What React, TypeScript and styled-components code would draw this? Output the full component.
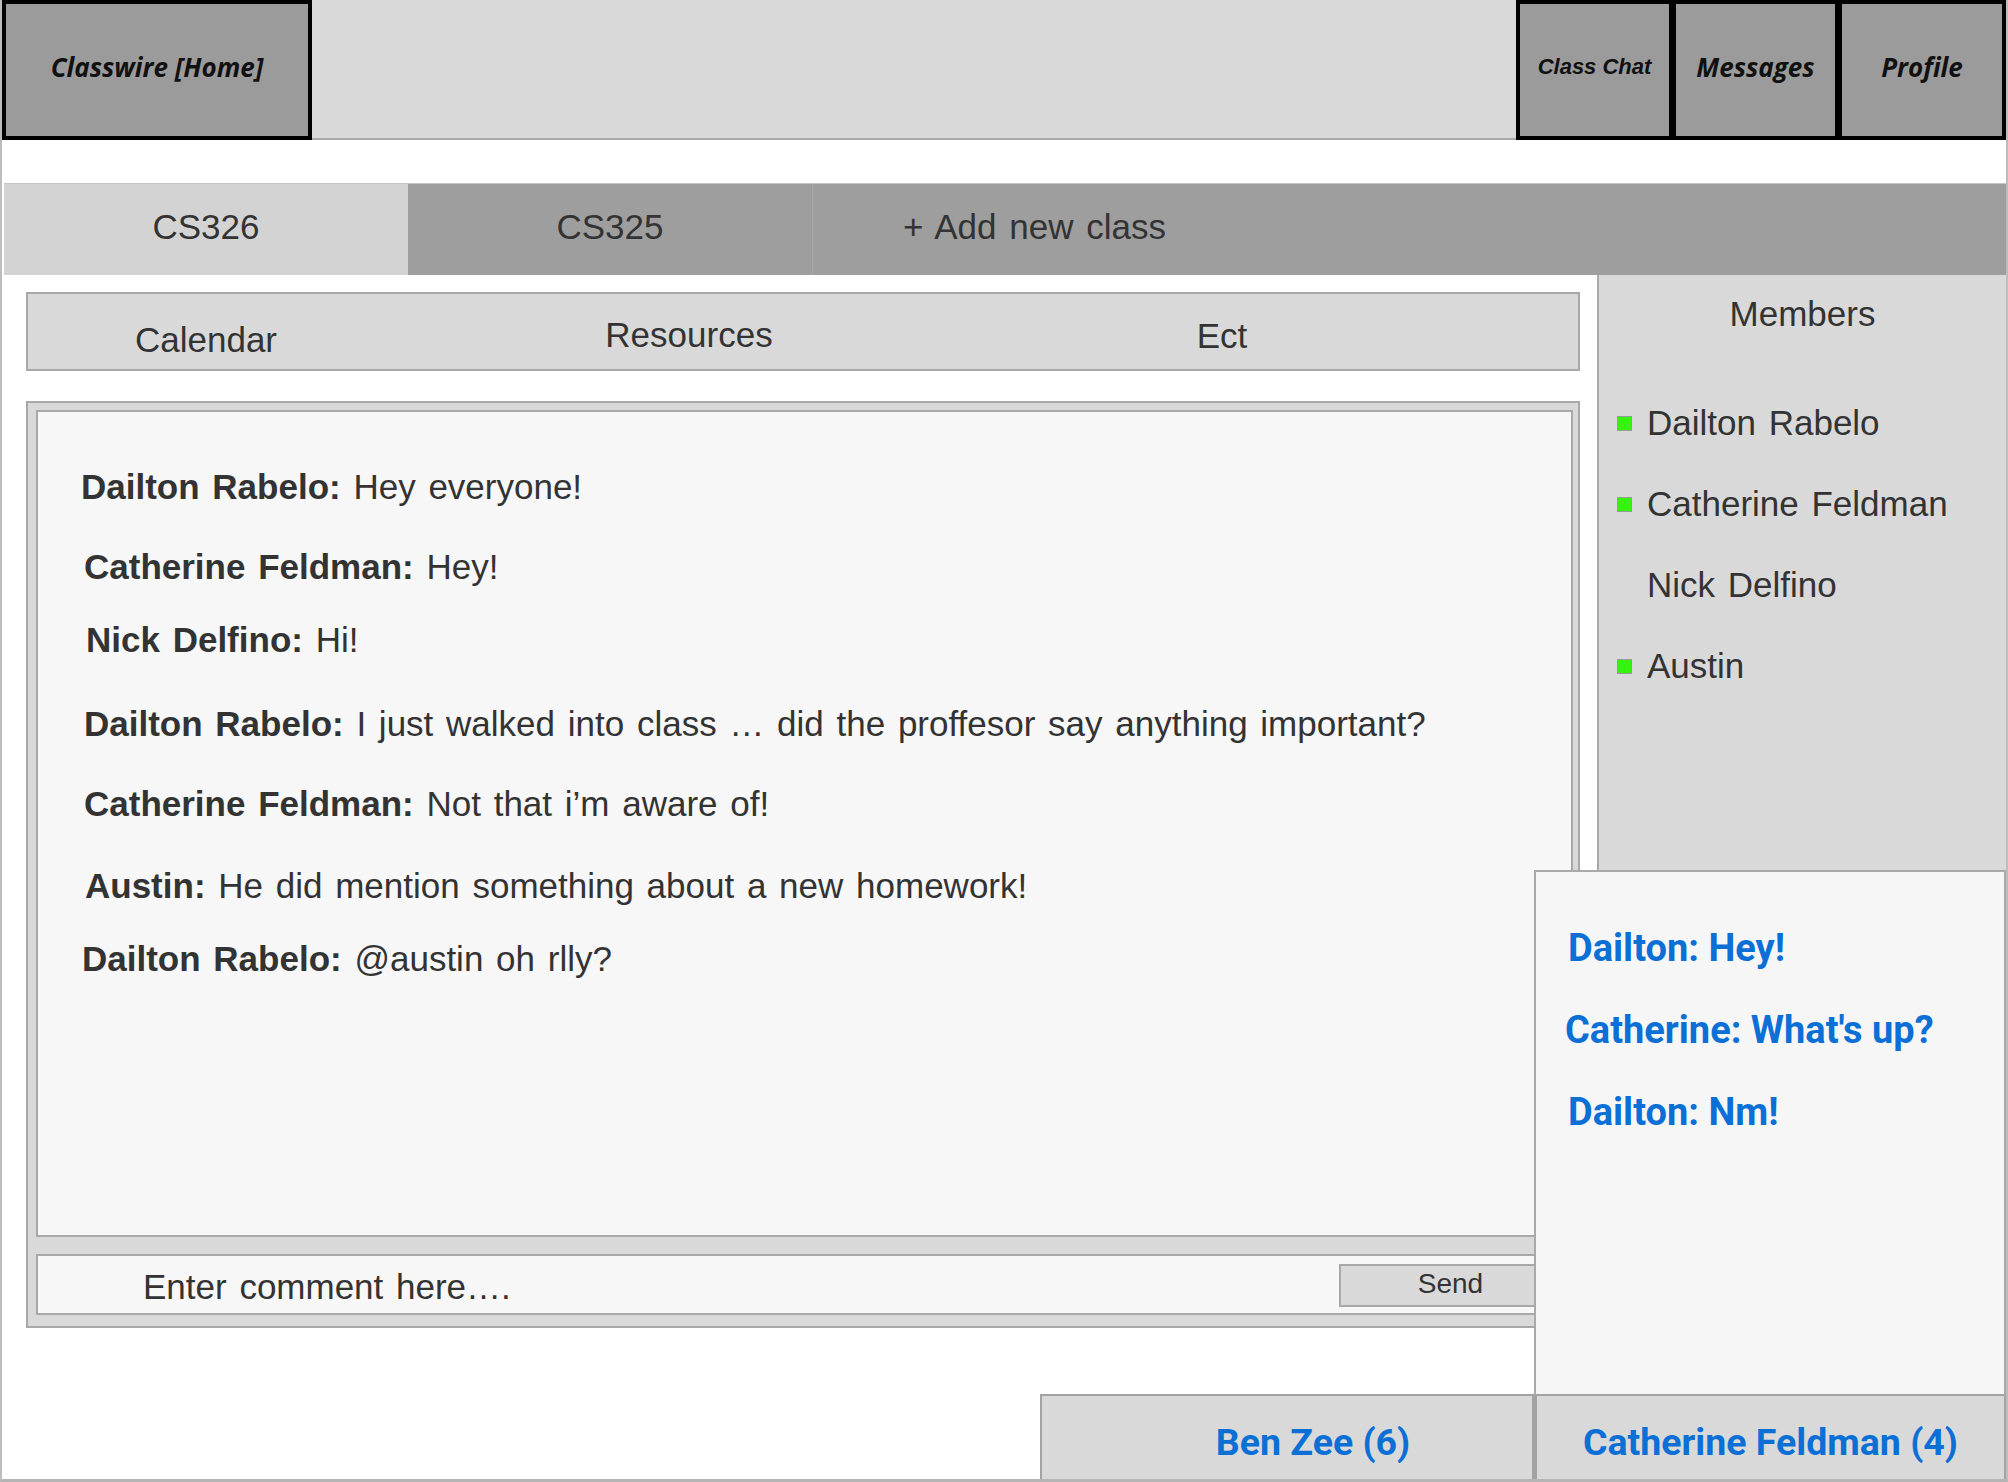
import React from "react";
import styled, { createGlobalStyle } from "styled-components";

const GlobalStyle = createGlobalStyle`
  html, body { margin: 0; padding: 0; background: #ffffff; }
  * { box-sizing: border-box; }
  body { font-family: "Liberation Sans", Arial, sans-serif; color: #333333; word-spacing: 3px; }
`;

const Page = styled.div`
  position: relative;
  width: 2008px;
  height: 1482px;
  display: flex;
  flex-direction: column;
  background: #ffffff;
  border-left: 2px solid #bdbdbd;
  border-right: 2px solid #bdbdbd;
  border-bottom: 3px solid #b5b5b5;
  overflow: hidden;
`;

const TopBar = styled.header`
  display: flex;
  height: 140px;
  flex-shrink: 0;
`;

const NavButton = styled.div<{ $w: number; $sans?: boolean }>`
  width: ${(p) => p.$w}px;
  height: 140px;
  background: #9b9b9b;
  border: 4px solid #000000;
  display: flex;
  align-items: center;
  justify-content: center;
  padding-bottom: 6px;
  font-family: ${(p) => (p.$sans ? '"Liberation Sans", Arial, sans-serif' : '"Open Sans", sans-serif')};
  font-style: italic;
  font-weight: 700;
  font-size: ${(p) => (p.$sans ? 22 : 26)}px;
  word-spacing: 0;
  color: #111111;
  white-space: nowrap;
  & + & { border-left-width: 3px; }
`;

const Filler = styled.div`
  flex: 1;
  background: #d9d9d9;
  border-bottom: 2px solid #a9a9a9;
`;

const CourseTabs = styled.nav`
  margin-top: 43px;
  margin-left: 2px;
  height: 92px;
  flex-shrink: 0;
  display: flex;
  background: #9e9e9e;
  border-top: 1px solid #c4c4c4;
`;

const CourseTab = styled.div<{ $active?: boolean; $w: number; $divider?: boolean }>`
  width: ${(p) => p.$w}px;
  display: flex;
  align-items: center;
  justify-content: center;
  padding-bottom: 5px;
  background: ${(p) => (p.$active ? "#d3d3d3" : "#9e9e9e")};
  border-left: ${(p) => (p.$divider ? "1px solid #a8a8a8" : "none")};
  font-size: 35px;
  color: #333333;
`;

const Body = styled.div`
  flex: 1;
  display: flex;
  min-height: 0;
`;

const LeftColumn = styled.main`
  width: 1595px;
  padding: 17px 17px 0 24px;
  display: flex;
  flex-direction: column;
`;

const SubNav = styled.div`
  height: 79px;
  background: #d9d9d9;
  border: 2px solid #a8a8a8;
  display: grid;
  grid-template-columns: 356px 610px 456px 1fr;
`;

const SubNavItem = styled.div<{ $top: number }>`
  padding-top: ${(p) => p.$top}px;
  text-align: center;
  font-size: 35px;
  line-height: 40px;
  color: #333333;
`;

const ChatBox = styled.section`
  margin-top: 30px;
  height: 927px;
  background: #d9d9d9;
  border: 2px solid #a8a8a8;
  padding: 7px 5px 11px 8px;
  display: flex;
  flex-direction: column;
  gap: 17px;
`;

const MessageArea = styled.div`
  flex: 1;
  background: #f7f7f7;
  border: 2px solid #a8a8a8;
  padding-left: 45px;
  display: flex;
  flex-direction: column;
`;

const Message = styled.p<{ $mt: number; $ml: number }>`
  margin: ${(p) => p.$mt}px 0 0 ${(p) => p.$ml}px;
  font-size: 35px;
  line-height: 40px;
  color: #333333;
  white-space: nowrap;
`;

const Author = styled.b`
  font-weight: 700;
`;

const InputRow = styled.div`
  height: 61px;
  flex-shrink: 0;
  background: #f7f7f7;
  border: 2px solid #a8a8a8;
  display: flex;
  align-items: center;
  justify-content: space-between;
  padding: 0 9px 0 105px;
`;

const Placeholder = styled.span`
  font-size: 35px;
  line-height: 40px;
  margin-top: 5px;
  color: #333333;
`;

const SendButton = styled.div`
  width: 223px;
  height: 43px;
  margin-top: 1px;
  background: #d9d9d9;
  border: 2px solid #a8a8a8;
  display: flex;
  align-items: center;
  justify-content: center;
  padding-bottom: 2px;
  font-size: 28px;
  color: #333333;
`;

const MembersPanel = styled.aside`
  flex: 1;
  background: #d9d9d9;
  border-left: 2px solid #a9a9a9;
  padding: 19px 0 0 18px;
  display: flex;
  flex-direction: column;
`;

const MembersTitle = styled.h2`
  margin: 0 0 69px -18px;
  font-weight: 400;
  font-size: 35px;
  line-height: 40px;
  text-align: center;
  color: #333333;
`;

const MemberList = styled.ul`
  list-style: none;
  margin: 0;
  padding: 0;
  display: flex;
  flex-direction: column;
  gap: 41px;
`;

const Member = styled.li`
  display: flex;
  align-items: center;
  gap: 15px;
  font-size: 35px;
  line-height: 40px;
  color: #333333;
`;

const StatusDot = styled.span<{ $online: boolean }>`
  width: 15px;
  height: 15px;
  flex-shrink: 0;
  background: #35f20f;
  border: 1px solid #9a9a9a;
  visibility: ${(p) => (p.$online ? "visible" : "hidden")};
`;

const ChatDock = styled.div`
  position: absolute;
  right: 0;
  bottom: 0;
  display: flex;
  flex-direction: column;
  align-items: flex-end;
`;

const ChatPopup = styled.div`
  width: 472px;
  height: 524px;
  background: #f6f6f6;
  border: 2px solid #a9a9a9;
  border-bottom: none;
  padding: 54px 0 0 30px;
  display: flex;
  flex-direction: column;
  gap: 38px;
`;

const PopupLine = styled.div<{ $ml: number }>`
  margin-left: ${(p) => p.$ml}px;
  font-family: Roboto, "Noto Sans", sans-serif;
  font-weight: 700;
  font-size: 38px;
  line-height: 44px;
  word-spacing: 0;
  color: #0b6fd6;
  white-space: nowrap;
`;

const DockTabs = styled.div`
  display: flex;
`;

const DockTab = styled.div<{ $w: number; $pl: number }>`
  width: ${(p) => p.$w}px;
  height: 85px;
  background: #d9d9d9;
  border: 2px solid #a3a3a3;
  border-bottom: none;
  & + & { border-left-width: 3px; }
  display: flex;
  align-items: center;
  justify-content: center;
  padding: 8px 0 0 ${(p) => p.$pl}px;
  font-family: Roboto, "Noto Sans", sans-serif;
  font-weight: 700;
  font-size: 37.5px;
  word-spacing: 0;
  color: #0b6fd6;
  white-space: nowrap;
`;

const messages = [
  { name: "Dailton Rabelo", text: "Hey everyone!", mt: 55, ml: -2 },
  { name: "Catherine Feldman", text: "Hey!", mt: 40, ml: 1 },
  { name: "Nick Delfino", text: "Hi!", mt: 33, ml: 3 },
  { name: "Dailton Rabelo", text: "I just walked into class … did the proffesor say anything important?", mt: 44, ml: 1 },
  { name: "Catherine Feldman", text: "Not that i’m aware of!", mt: 40, ml: 1 },
  { name: "Austin", text: "He did mention something about a new homework!", mt: 42, ml: 2 },
  { name: "Dailton Rabelo", text: "@austin oh rlly?", mt: 33, ml: -1 },
];

const members = [
  { name: "Dailton Rabelo", online: true },
  { name: "Catherine Feldman", online: true },
  { name: "Nick Delfino", online: false },
  { name: "Austin", online: true },
];

const popupLines = [
  { text: "Dailton: Hey!", ml: 2 },
  { text: "Catherine: What's up?", ml: -1 },
  { text: "Dailton: Nm!", ml: 2 },
];

export default function App() {
  return (
    <>
      <GlobalStyle />
      <Page>
        <TopBar>
          <NavButton $w={310}>Classwire [Home]</NavButton>
          <Filler />
          <NavButton $w={157} $sans>Class Chat</NavButton>
          <NavButton $w={166}>Messages</NavButton>
          <NavButton $w={167}>Profile</NavButton>
        </TopBar>

        <CourseTabs>
          <CourseTab $active $w={404}>CS326</CourseTab>
          <CourseTab $w={404}>CS325</CourseTab>
          <CourseTab $w={444} $divider>+ Add new class</CourseTab>
        </CourseTabs>

        <Body>
          <LeftColumn>
            <SubNav>
              <SubNavItem $top={26}>Calendar</SubNavItem>
              <SubNavItem $top={21}>Resources</SubNavItem>
              <SubNavItem $top={22}>Ect</SubNavItem>
            </SubNav>

            <ChatBox>
              <MessageArea>
                {messages.map((m, i) => (
                  <Message key={i} $mt={m.mt} $ml={m.ml}>
                    <Author>{m.name}:</Author> {m.text}
                  </Message>
                ))}
              </MessageArea>
              <InputRow>
                <Placeholder>Enter comment here….</Placeholder>
                <SendButton>Send</SendButton>
              </InputRow>
            </ChatBox>
          </LeftColumn>

          <MembersPanel>
            <MembersTitle>Members</MembersTitle>
            <MemberList>
              {members.map((m) => (
                <Member key={m.name}>
                  <StatusDot $online={m.online} />
                  {m.name}
                </Member>
              ))}
            </MemberList>
          </MembersPanel>
        </Body>

        <ChatDock>
          <ChatPopup>
            {popupLines.map((l, i) => (
              <PopupLine key={i} $ml={l.ml}>{l.text}</PopupLine>
            ))}
          </ChatPopup>
          <DockTabs>
            <DockTab $w={494} $pl={52}>Ben Zee (6)</DockTab>
            <DockTab $w={472} $pl={0}>Catherine Feldman (4)</DockTab>
          </DockTabs>
        </ChatDock>
      </Page>
    </>
  );
}
